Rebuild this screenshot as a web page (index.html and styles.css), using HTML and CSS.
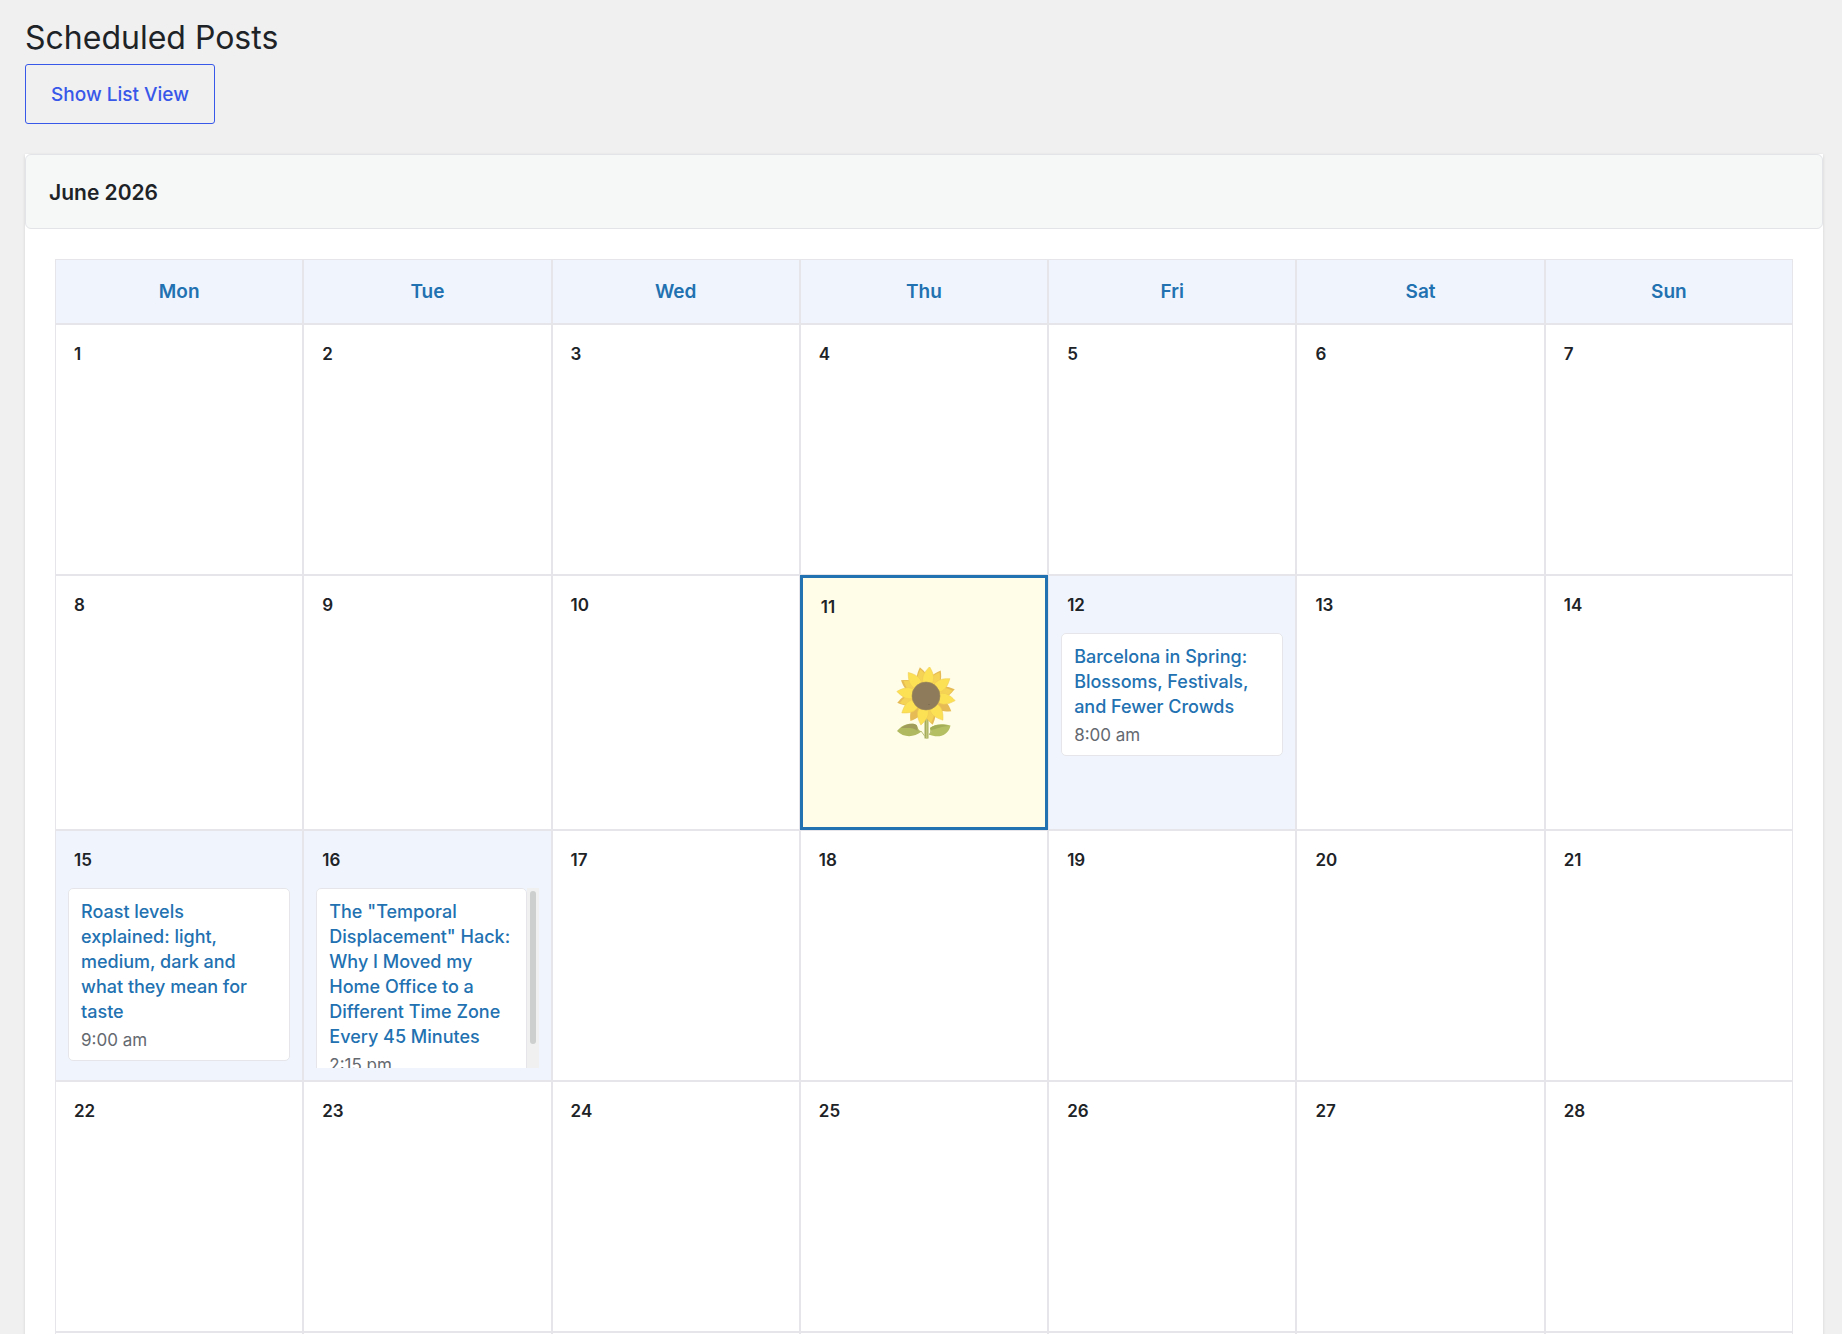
FILE: index.html
```html
<!DOCTYPE html>
<html lang="en">
<head>
<meta charset="utf-8">
<title>Scheduled Posts</title>
<link rel="stylesheet" href="styles.css">
</head>
<body>
<main class="page">
  <h1 class="page-title">Scheduled Posts</h1>
  <button type="button" class="view-toggle">Show List View</button>

  <section class="calendar-card">
    <h2 class="calendar-month">June 2026</h2>
    <div class="calendar-body">
      <table class="calendar">
        <thead>
          <tr>
            <th scope="col">Mon</th>
            <th scope="col">Tue</th>
            <th scope="col">Wed</th>
            <th scope="col">Thu</th>
            <th scope="col">Fri</th>
            <th scope="col">Sat</th>
            <th scope="col">Sun</th>
          </tr>
        </thead>
        <tbody>
          <tr>
            <td><div class="day">1</div></td>
            <td><div class="day">2</div></td>
            <td><div class="day">3</div></td>
            <td><div class="day">4</div></td>
            <td><div class="day">5</div></td>
            <td><div class="day">6</div></td>
            <td><div class="day">7</div></td>
          </tr>
          <tr>
            <td><div class="day">8</div></td>
            <td><div class="day">9</div></td>
            <td><div class="day">10</div></td>
            <td class="today">
              <div class="day">11</div>
              <svg class="sunflower" viewBox="0 0 64 72" role="img" aria-label="Sunflower">
                <defs>
                  <path id="petal" d="M-4 -12C-7 -18 -5 -23 0 -29.500C5 -23 7 -18 4 -12Z"/>
                </defs>
                <path d="M32.500 50h4v21.500h-4z" fill="#a5ad5c"/>
                <path d="M34 50h1.500v21.500H34z" fill="#c2c578"/>
                <path d="M5 64C10 57 20 55 24.500 58C26 60 25.500 63 29.500 64.500C22 70.500 12 71 5 64Z" fill="#b0b860"/>
                <path d="M9 61C14 57 21 55.500 24.500 58C26 60 25 62 25.500 64C22 60 15 61 9 61Z" fill="#9f9c5c"/>
                <path d="M58.500 58.500C50 56 42 57 38 61C38 63 39 65 37 67.500C45 71 56 70 58.500 58.500Z" fill="#b4be63"/>
                <path d="M38 61C43 57 51 57 57 59C50 59 45 62 39 63Z" fill="#a3ad58"/>
                <path d="M29 64L33 69.500M37 68L40 64" stroke="#bcc07a" fill="none"/>
                <g transform="translate(34 29)">
                  <g fill="#e6bb55">
                    <use href="#petal" transform="rotate(-12)"/>
                    <use href="#petal" transform="rotate(30)"/>
                    <use href="#petal" transform="rotate(77)"/>
                    <use href="#petal" transform="rotate(121)"/>
                    <use href="#petal" transform="rotate(167)"/>
                    <use href="#petal" transform="rotate(212)"/>
                    <use href="#petal" transform="rotate(257)"/>
                    <use href="#petal" transform="rotate(302)"/>
                  </g>
                  <g fill="#f5d355" transform="scale(.92)">
                    <use href="#petal" transform="rotate(-12)"/>
                    <use href="#petal" transform="rotate(30)"/>
                    <use href="#petal" transform="rotate(79)"/>
                    <use href="#petal" transform="rotate(169)"/>
                    <use href="#petal" transform="rotate(255)"/>
                    <use href="#petal" transform="rotate(304)"/>
                  </g>
                  <g fill="#fce154" stroke="#efca52" stroke-width=".5">
                    <use href="#petal" transform="rotate(7)"/>
                    <use href="#petal" transform="rotate(54)"/>
                    <use href="#petal" transform="rotate(99)"/>
                    <use href="#petal" transform="rotate(145)"/>
                    <use href="#petal" transform="rotate(190)"/>
                    <use href="#petal" transform="rotate(235)"/>
                    <use href="#petal" transform="rotate(279)"/>
                    <use href="#petal" transform="rotate(323)"/>
                  </g>
                  <circle r="14" fill="#8d7b5b" stroke="#a18a58" stroke-width=".6"/>
                  <circle cx="3" cy="8.500" r=".5" fill="#6f6048"/>
                </g>
              </svg>
            </td>
            <td class="has-posts">
              <div class="day">12</div>
              <div class="posts">
                <article class="post">
                  <a class="post-title" href="#">Barcelona in Spring: Blossoms, Festivals, and Fewer Crowds</a>
                  <div class="post-time">8:00 am</div>
                </article>
              </div>
            </td>
            <td><div class="day">13</div></td>
            <td><div class="day">14</div></td>
          </tr>
          <tr>
            <td class="has-posts">
              <div class="day">15</div>
              <div class="posts">
                <article class="post">
                  <a class="post-title" href="#">Roast levels explained: light, medium, dark and what they mean for taste</a>
                  <div class="post-time">9:00 am</div>
                </article>
              </div>
            </td>
            <td class="has-posts">
              <div class="day">16</div>
              <div class="posts-scroller">
                <div class="posts">
                  <article class="post">
                    <a class="post-title" href="#">The "Temporal Displacement" Hack: Why I Moved my Home Office to a Different Time Zone Every 45 Minutes</a>
                    <div class="post-time">2:15 pm</div>
                  </article>
                </div>
                <div class="scroll-track" aria-hidden="true"><div class="scroll-thumb"></div></div>
              </div>
            </td>
            <td><div class="day">17</div></td>
            <td><div class="day">18</div></td>
            <td><div class="day">19</div></td>
            <td><div class="day">20</div></td>
            <td><div class="day">21</div></td>
          </tr>
          <tr>
            <td><div class="day">22</div></td>
            <td><div class="day">23</div></td>
            <td><div class="day">24</div></td>
            <td><div class="day">25</div></td>
            <td><div class="day">26</div></td>
            <td><div class="day">27</div></td>
            <td><div class="day">28</div></td>
          </tr>
          <tr>
            <td><div class="day">29</div></td>
            <td><div class="day">30</div></td>
            <td></td>
            <td></td>
            <td></td>
            <td></td>
            <td></td>
          </tr>
        </tbody>
      </table>
    </div>
  </section>
</main>
</body>
</html>
```
FILE: styles.css
```css
* {
  box-sizing: border-box;
}

body {
  margin: 0;
  background: #f0f0f0;
  color: #1d2327;
  font-family: Inter, "Liberation Sans", sans-serif;
  font-size: 17px;
}

.page {
  padding: 18px 19px 30px 25px;
}

.page-title {
  margin: 0 0 6px;
  font-size: 32px;
  font-weight: 400;
  line-height: 40px;
}

.view-toggle {
  display: block;
  min-width: 190px;
  height: 60px;
  padding: 2px 24px 0;
  border: 1px solid #3858e9;
  border-radius: 3px;
  background: transparent;
  color: #3858e9;
  font: 500 19px/24px Inter, "Liberation Sans", sans-serif;
  cursor: pointer;
}

.calendar-card {
  margin-top: 30px;
  background: #fff;
  box-shadow: 0 1px 3px rgba(0, 0, 0, .12);
}

.calendar-month {
  margin: 0;
  padding: 25px 23px 22px;
  border: 1px solid #e2e4e7;
  border-radius: 6px;
  background: #f6f8f8;
  font-size: 21px;
  font-weight: 600;
  line-height: 26px;
}

.calendar-body {
  padding: 30px;
}

.calendar {
  width: 100%;
  table-layout: fixed;
  border-spacing: 0;
}

.calendar th {
  height: 65px;
  padding: 0;
  border: 1px solid #e5e5ea;
  background: #f0f5fd;
  color: #2271b1;
  font-size: 19px;
  font-weight: 600;
}

.calendar td {
  box-sizing: content-box;
  height: 225px;
  padding: 12px;
  border: 1px solid #e5e5ea;
  vertical-align: top;
}

.calendar .has-posts {
  background: #f0f5fd;
}

.calendar .today {
  border: 3px solid #2271b1;
  background: #fffde7;
}

.day {
  padding: 5px 6px 16px;
  font-weight: 600;
  line-height: 24px;
}

.sunflower {
  display: block;
  width: 64px;
  height: 72px;
  margin: 32px auto 0;
}

.posts {
  flex: 1;
  max-height: 180px;
  overflow-y: auto;
  scrollbar-width: none;
}

.posts-scroller {
  display: flex;
  height: 180px;
}

.scroll-track {
  width: 12px;
  padding: 3px;
  background: #f0f0f0;
}

.scroll-thumb {
  height: 153px;
  border-radius: 3px;
  background: #cccfce;
}

.post {
  margin-bottom: 8px;
  padding: 10px 14px 9px 12px;
  border: 1px solid #e5e5ea;
  border-radius: 5px;
  background: #fff;
}

.post-title {
  display: block;
  color: #2271b1;
  font-size: 18px;
  font-weight: 500;
  line-height: 25px;
  text-decoration: none;
}

.post-time {
  margin-top: 6px;
  color: #646970;
  font-size: 17px;
  line-height: 21px;
}
```
